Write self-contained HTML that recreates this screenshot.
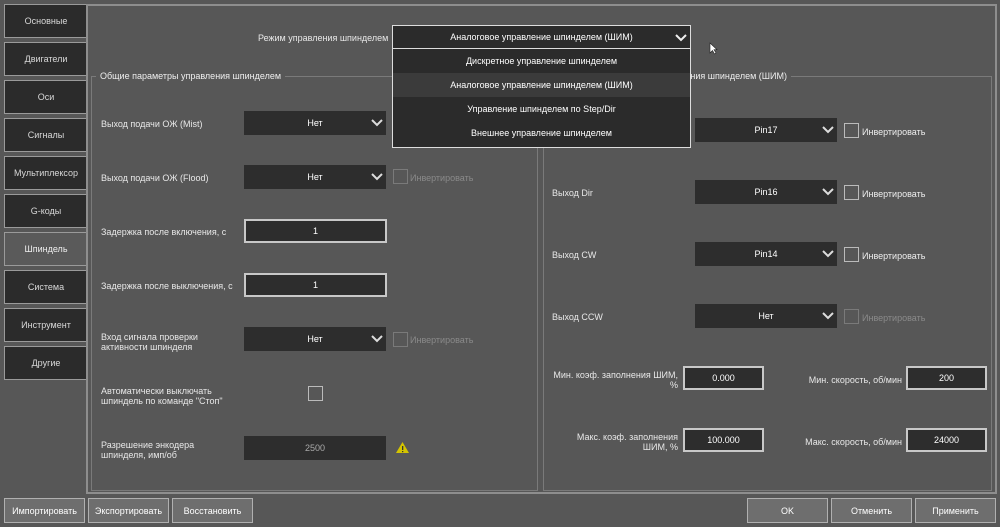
<!DOCTYPE html><html><head><meta charset="utf-8"><style>
*{box-sizing:border-box;margin:0;padding:0}
body{width:1000px;height:527px;background:#575757;font-family:"Liberation Sans","DejaVu Sans",sans-serif;font-size:9px;color:#e8e8e8;position:relative;overflow:hidden}
.a{position:absolute}
.tab{position:absolute;left:4px;width:83px;height:34px;background:#2b2b2b;border:1px solid #9a9a9a;border-right:none;display:flex;align-items:center;justify-content:center;color:#d8d8d8}
.tab.sel{background:#5a5a5a;color:#eee}
.panel{position:absolute;left:86px;top:4px;width:911px;height:490px;border:2px solid #8e8e8e;border-right-width:2px}
.grp{position:absolute;border:1px solid #7a7a7a}
.gt{position:absolute;background:#575757;padding:0 4px;top:-6px;color:#eee}
.lbl{position:absolute;line-height:10px}
.cb{position:absolute;width:142px;height:24px;background:#2d2d2d;display:flex;align-items:center;justify-content:center;color:#fff}
.cb svg{position:absolute;right:3px;top:7px}
.inp{position:absolute;background:#2d2d2d;border:2px solid #c8c8c8;display:flex;align-items:center;justify-content:center;color:#fff}
.chk{position:absolute;width:15px;height:15px;border:1px solid #bbb}
.chk.d{border-color:#7a7a7a}
.inv{position:absolute;color:#eee}
.inv.d{color:#8a8a8a}
.btn{position:absolute;top:498px;height:25px;width:81px;background:#6e6e6e;border:1px solid #b0b0b0;display:flex;align-items:center;justify-content:center;color:#fff}
.it{height:24px;display:flex;align-items:center;justify-content:center;color:#fff}
</style></head><body>
<div class="tab" style="top:4px">Основные</div>
<div class="tab" style="top:42px">Двигатели</div>
<div class="tab" style="top:80px">Оси</div>
<div class="tab" style="top:118px">Сигналы</div>
<div class="tab" style="top:156px">Мультиплексор</div>
<div class="tab" style="top:194px">G-коды</div>
<div class="tab sel" style="top:232px">Шпиндель</div>
<div class="tab" style="top:270px">Система</div>
<div class="tab" style="top:308px">Инструмент</div>
<div class="tab" style="top:346px">Другие</div>
<div class="panel"></div>

<div class="lbl" style="left:258px;top:33px">Режим управления шпинделем</div>

<div class="grp" style="left:91px;top:76px;width:447px;height:415px"><div class="gt" style="left:4px">Общие параметры управления шпинделем</div></div>
<div class="grp" style="left:543px;top:76px;width:449px;height:415px"><div class="gt" style="left:4px">Параметры аналогового управления шпинделем (ШИМ)</div></div>

<div class="lbl" style="left:101px;top:119px">Выход подачи ОЖ (Mist)</div>
<div class="cb" style="left:244px;top:111px">Нет<svg width="12" height="9"><path d="M1 2l5 5 5-5" stroke="#ddd" stroke-width="2" fill="none"/></svg></div>
<div class="lbl" style="left:101px;top:173px">Выход подачи ОЖ (Flood)</div>
<div class="cb" style="left:244px;top:165px">Нет<svg width="12" height="9"><path d="M1 2l5 5 5-5" stroke="#ddd" stroke-width="2" fill="none"/></svg></div>
<div class="chk d" style="left:393px;top:169px"></div><div class="inv d" style="left:410px;top:173px">Инвертировать</div>
<div class="lbl" style="left:101px;top:227px">Задержка после включения, с</div>
<div class="inp" style="left:244px;top:219px;width:143px;height:24px">1</div>
<div class="lbl" style="left:101px;top:281px">Задержка после выключения, с</div>
<div class="inp" style="left:244px;top:273px;width:143px;height:24px">1</div>
<div class="lbl" style="left:101px;top:332px">Вход сигнала проверки<br>активности шпинделя</div>
<div class="cb" style="left:244px;top:327px">Нет<svg width="12" height="9"><path d="M1 2l5 5 5-5" stroke="#ddd" stroke-width="2" fill="none"/></svg></div>
<div class="chk d" style="left:393px;top:332px"></div><div class="inv d" style="left:410px;top:335px">Инвертировать</div>
<div class="lbl" style="left:101px;top:386px">Автоматически выключать<br>шпиндель по команде "Стоп"</div>
<div class="chk" style="left:308px;top:386px"></div>
<div class="lbl" style="left:101px;top:440px">Разрешение энкодера<br>шпинделя, имп/об</div>
<div class="cb" style="left:244px;top:436px;color:#aaa">2500</div>
<svg class="a" style="left:395px;top:441px" width="15" height="13"><path d="M7.5 1L14 12H1z" fill="#d4c400"/><rect x="7" y="5" width="1.3" height="4" fill="#333"/><rect x="7" y="10" width="1.3" height="1.2" fill="#333"/></svg>

<div class="cb" style="left:695px;top:118px">Pin17<svg width="12" height="9"><path d="M1 2l5 5 5-5" stroke="#ddd" stroke-width="2" fill="none"/></svg></div>
<div class="chk" style="left:844px;top:123px"></div><div class="inv" style="left:862px;top:127px">Инвертировать</div>
<div class="lbl" style="left:552px;top:188px">Выход Dir</div>
<div class="cb" style="left:695px;top:180px">Pin16<svg width="12" height="9"><path d="M1 2l5 5 5-5" stroke="#ddd" stroke-width="2" fill="none"/></svg></div>
<div class="chk" style="left:844px;top:185px"></div><div class="inv" style="left:862px;top:189px">Инвертировать</div>
<div class="lbl" style="left:552px;top:250px">Выход CW</div>
<div class="cb" style="left:695px;top:242px">Pin14<svg width="12" height="9"><path d="M1 2l5 5 5-5" stroke="#ddd" stroke-width="2" fill="none"/></svg></div>
<div class="chk" style="left:844px;top:247px"></div><div class="inv" style="left:862px;top:251px">Инвертировать</div>
<div class="lbl" style="left:552px;top:312px">Выход CCW</div>
<div class="cb" style="left:695px;top:304px">Нет<svg width="12" height="9"><path d="M1 2l5 5 5-5" stroke="#ddd" stroke-width="2" fill="none"/></svg></div>
<div class="chk d" style="left:844px;top:309px"></div><div class="inv d" style="left:862px;top:313px">Инвертировать</div>

<div class="lbl" style="left:540px;top:370px;width:138px;text-align:right">Мин. коэф. заполнения ШИМ,<br>%</div>
<div class="inp" style="left:683px;top:366px;width:81px;height:24px">0.000</div>
<div class="lbl" style="left:770px;top:375px;width:132px;text-align:right">Мин. скорость, об/мин</div>
<div class="inp" style="left:906px;top:366px;width:81px;height:24px">200</div>
<div class="lbl" style="left:540px;top:432px;width:138px;text-align:right">Макс. коэф. заполнения<br>ШИМ, %</div>
<div class="inp" style="left:683px;top:428px;width:81px;height:24px">100.000</div>
<div class="lbl" style="left:770px;top:437px;width:132px;text-align:right">Макс. скорость, об/мин</div>
<div class="inp" style="left:906px;top:428px;width:81px;height:24px">24000</div>

<div class="a" style="left:392px;top:25px;width:299px;height:24px;background:#2b2b2b;border:1px solid #ddd;display:flex;align-items:center;justify-content:center;color:#fff">Аналоговое управление шпинделем (ШИМ)<svg style="position:absolute;right:3px;top:7px" width="12" height="9"><path d="M1 2l5 5 5-5" stroke="#eee" stroke-width="2" fill="none"/></svg></div>
<div class="a" style="left:392px;top:49px;width:299px;height:99px;background:#2b2b2b;border:1px solid #ddd;border-top:none">
<div class="it">Дискретное управление шпинделем</div>
<div class="it" style="background:#3b3b3b">Аналоговое управление шпинделем (ШИМ)</div>
<div class="it">Управление шпинделем по Step/Dir</div>
<div class="it">Внешнее управление шпинделем</div>
</div>
<svg class="a" style="left:709px;top:42px" width="9" height="13"><path d="M1 1v10l2.5-2.5 2 3.5 1.5-1-2-3.3H8z" fill="#fff" stroke="#222" stroke-width=".6"/></svg>

<div class="btn" style="left:4px">Импортировать</div>
<div class="btn" style="left:88px">Экспортировать</div>
<div class="btn" style="left:172px">Восстановить</div>
<div class="btn" style="left:747px">OK</div>
<div class="btn" style="left:831px">Отменить</div>
<div class="btn" style="left:915px">Применить</div>
</body></html>
